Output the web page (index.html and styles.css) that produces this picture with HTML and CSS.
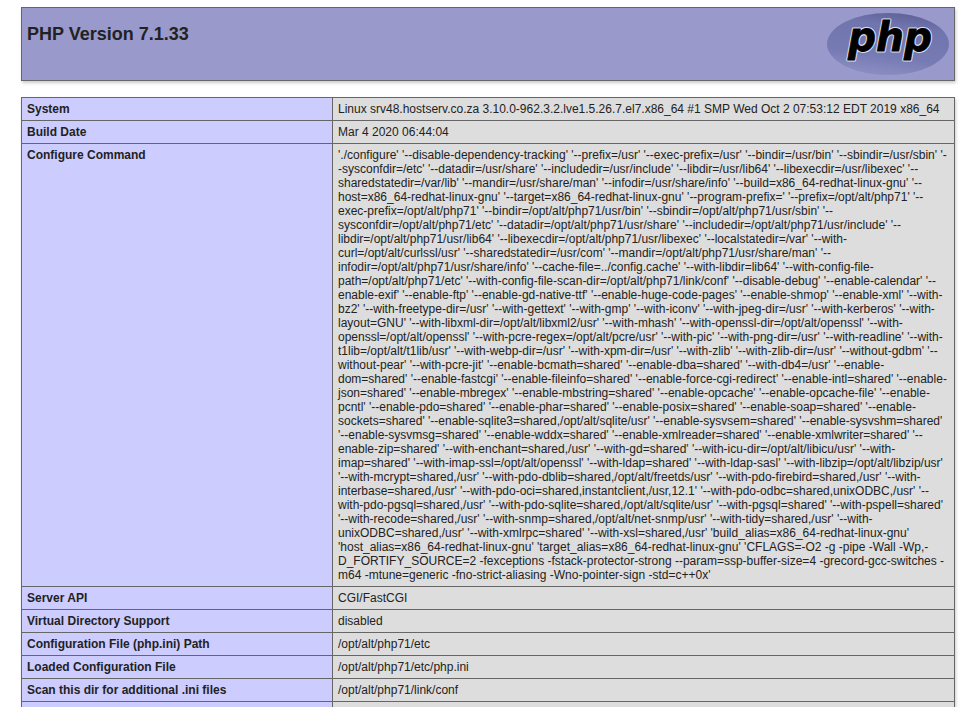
FILE: index.html
```html
<!DOCTYPE html>
<html lang="en">
<head>
<meta charset="utf-8">
<title>phpinfo()</title>
<link rel="stylesheet" href="styles.css">
</head>
<body>
<div class="center">
<table class="info">
<tr class="h"><td>
<svg class="logo" viewBox="0 0 122 64" width="122" height="64" role="img" aria-label="PHP logo">
<defs>
<linearGradient id="oval" x1="0.65" y1="0" x2="0.4" y2="1">
<stop offset="0" stop-color="#5f6298"/>
<stop offset="0.22" stop-color="#7175ae"/>
<stop offset="0.7" stop-color="#777bb4"/>
<stop offset="1" stop-color="#8b8ec2"/>
</linearGradient>
</defs>
<ellipse cx="61" cy="32" rx="61" ry="31" fill="url(#oval)"/>
<text class="logo-halo" x="21" y="39" textLength="84" lengthAdjust="spacingAndGlyphs">php</text>
<text class="logo-text" x="21" y="39" textLength="84" lengthAdjust="spacingAndGlyphs">php</text>
</svg>
<h1 class="p">PHP Version 7.1.33</h1>
</td></tr>
</table>
<table class="info">
<tr><td class="e">System</td><td class="v">Linux srv48.hostserv.co.za 3.10.0-962.3.2.lve1.5.26.7.el7.x86_64 #1 SMP Wed Oct 2 07:53:12 EDT 2019 x86_64</td></tr>
<tr><td class="e">Build Date</td><td class="v">Mar 4 2020 06:44:04</td></tr>
<tr><td class="e">Configure Command</td><td class="v">'./configure' '--disable-dependency-tracking' '--prefix=/usr' '--exec-prefix=/usr' '--bindir=/usr/bin' '--sbindir=/usr/sbin' '--sysconfdir=/etc' '--datadir=/usr/share' '--includedir=/usr/include' '--libdir=/usr/lib64' '--libexecdir=/usr/libexec' '--sharedstatedir=/var/lib' '--mandir=/usr/share/man' '--infodir=/usr/share/info' '--build=x86_64-redhat-linux-gnu' '--host=x86_64-redhat-linux-gnu' '--target=x86_64-redhat-linux-gnu' '--program-prefix=' '--prefix=/opt/alt/php71' '--exec-prefix=/opt/alt/php71' '--bindir=/opt/alt/php71/usr/bin' '--sbindir=/opt/alt/php71/usr/sbin' '--sysconfdir=/opt/alt/php71/etc' '--datadir=/opt/alt/php71/usr/share' '--includedir=/opt/alt/php71/usr/include' '--libdir=/opt/alt/php71/usr/lib64' '--libexecdir=/opt/alt/php71/usr/libexec' '--localstatedir=/var' '--with-curl=/opt/alt/curlssl/usr' '--sharedstatedir=/usr/com' '--mandir=/opt/alt/php71/usr/share/man' '--infodir=/opt/alt/php71/usr/share/info' '--cache-file=../config.cache' '--with-libdir=lib64' '--with-config-file-path=/opt/alt/php71/etc' '--with-config-file-scan-dir=/opt/alt/php71/link/conf' '--disable-debug' '--enable-calendar' '--enable-exif' '--enable-ftp' '--enable-gd-native-ttf' '--enable-huge-code-pages' '--enable-shmop' '--enable-xml' '--with-bz2' '--with-freetype-dir=/usr' '--with-gettext' '--with-gmp' '--with-iconv' '--with-jpeg-dir=/usr' '--with-kerberos' '--with-layout=GNU' '--with-libxml-dir=/opt/alt/libxml2/usr' '--with-mhash' '--with-openssl-dir=/opt/alt/openssl' '--with-openssl=/opt/alt/openssl' '--with-pcre-regex=/opt/alt/pcre/usr' '--with-pic' '--with-png-dir=/usr' '--with-readline' '--with-t1lib=/opt/alt/t1lib/usr' '--with-webp-dir=/usr' '--with-xpm-dir=/usr' '--with-zlib' '--with-zlib-dir=/usr' '--without-gdbm' '--without-pear' '--with-pcre-jit' '--enable-bcmath=shared' '--enable-dba=shared' '--with-db4=/usr' '--enable-dom=shared' '--enable-fastcgi' '--enable-fileinfo=shared' '--enable-force-cgi-redirect' '--enable-intl=shared' '--enable-json=shared' '--enable-mbregex' '--enable-mbstring=shared' '--enable-opcache' '--enable-opcache-file' '--enable-pcntl' '--enable-pdo=shared' '--enable-phar=shared' '--enable-posix=shared' '--enable-soap=shared' '--enable-sockets=shared' '--enable-sqlite3=shared,/opt/alt/sqlite/usr' '--enable-sysvsem=shared' '--enable-sysvshm=shared' '--enable-sysvmsg=shared' '--enable-wddx=shared' '--enable-xmlreader=shared' '--enable-xmlwriter=shared' '--enable-zip=shared' '--with-enchant=shared,/usr' '--with-gd=shared' '--with-icu-dir=/opt/alt/libicu/usr' '--with-imap=shared' '--with-imap-ssl=/opt/alt/openssl' '--with-ldap=shared' '--with-ldap-sasl' '--with-libzip=/opt/alt/libzip/usr' '--with-mcrypt=shared,/usr' '--with-pdo-dblib=shared,/opt/alt/freetds/usr' '--with-pdo-firebird=shared,/usr' '--with-interbase=shared,/usr' '--with-pdo-oci=shared,instantclient,/usr,12.1' '--with-pdo-odbc=shared,unixODBC,/usr' '--with-pdo-pgsql=shared,/usr' '--with-pdo-sqlite=shared,/opt/alt/sqlite/usr' '--with-pgsql=shared' '--with-pspell=shared' '--with-recode=shared,/usr' '--with-snmp=shared,/opt/alt/net-snmp/usr' '--with-tidy=shared,/usr' '--with-unixODBC=shared,/usr' '--with-xmlrpc=shared' '--with-xsl=shared,/usr' 'build_alias=x86_64-redhat-linux-gnu' 'host_alias=x86_64-redhat-linux-gnu' 'target_alias=x86_64-redhat-linux-gnu' 'CFLAGS=-O2 -g -pipe -Wall -Wp,-D_FORTIFY_SOURCE=2 -fexceptions -fstack-protector-strong --param=ssp-buffer-size=4 -grecord-gcc-switches -m64 -mtune=generic -fno-strict-aliasing -Wno-pointer-sign -std=c++0x'</td></tr>
<tr><td class="e">Server API</td><td class="v">CGI/FastCGI</td></tr>
<tr><td class="e">Virtual Directory Support</td><td class="v">disabled</td></tr>
<tr><td class="e">Configuration File (php.ini) Path</td><td class="v">/opt/alt/php71/etc</td></tr>
<tr><td class="e">Loaded Configuration File</td><td class="v">/opt/alt/php71/etc/php.ini</td></tr>
<tr><td class="e">Scan this dir for additional .ini files</td><td class="v">/opt/alt/php71/link/conf</td></tr>
<tr><td class="e">&nbsp;</td><td class="v">&nbsp;</td></tr>
</table>
</div>
</body>
</html>
```

FILE: styles.css
```css
html, body {
  margin: 0;
  height: 100%;
}

body {
  background: #fff;
  color: #222;
  font-family: "Liberation Sans", Arial, sans-serif;
  overflow: hidden;
}

.center {
  height: 100vh;
  box-sizing: border-box;
  overflow: hidden;
  padding: 7px 0 0 21px;
}

.info {
  border-collapse: collapse;
  border: 0;
  width: 934px;
  margin-bottom: 16px;
  box-shadow: 1px 2px 3px #ccc;
  table-layout: fixed;
}

.info td {
  border: 1px solid #666;
  font-size: 12px;
  vertical-align: baseline;
  padding: 4px 5px;
}

.h td {
  background: #99c;
  font-weight: bold;
  height: 64px;
}

.p {
  font-size: 18px;
  text-align: left;
  margin: 12px 0;
}

.logo {
  float: right;
  display: block;
}

.logo-text,
.logo-halo {
  font-family: "DejaVu Sans", sans-serif;
  font-size: 40px;
  font-weight: bold;
  font-style: italic;
}

.logo-halo {
  fill: #fff;
  stroke: #dfe0f0;
  stroke-width: 3px;
  stroke-linejoin: round;
}

.logo-text {
  fill: #000;
  stroke: #000;
  stroke-width: 0.8px;
}

.e {
  background: #ccf;
  width: 300px;
  font-weight: bold;
}

.v {
  background: #ddd;
  word-wrap: break-word;
}
```
